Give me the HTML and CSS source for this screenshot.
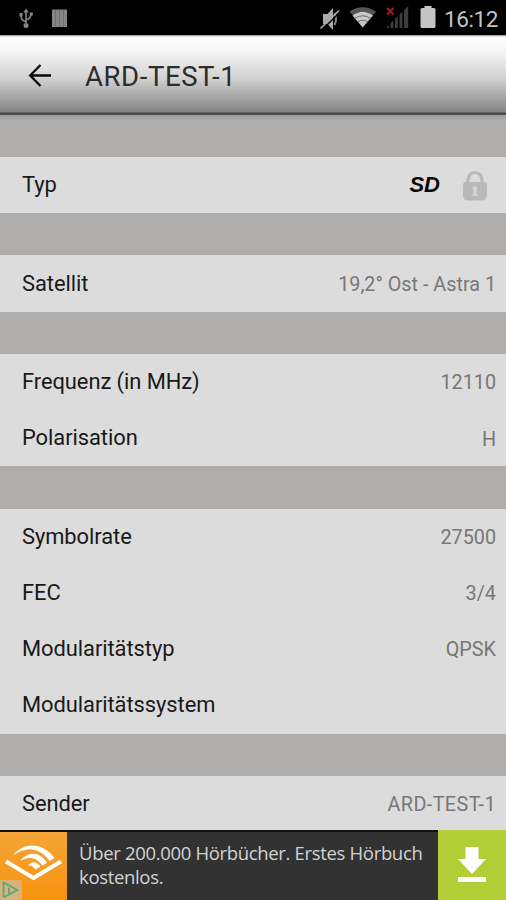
FILE: index.html
```html
<!DOCTYPE html>
<html lang="de">
<head>
<meta charset="utf-8">
<title>ARD-TEST-1</title>
<link rel="stylesheet" href="styles.css">
</head>
<body>
<div class="screen">
  <div class="status">
    <svg class="status-icons" width="80" height="36" viewBox="0 0 80 36">
      <g fill="none" stroke="#858585" stroke-width="1.6">
        <path d="M26 25V11M26 22C22 20 21 19 21 15M26 20C30 19 31 17 31 14"/>
      </g>
      <path fill="#858585" d="M26 8.500l2.700 4h-5.400zM19.500 13h3v3.500h-3zM29.800 12.500h3v3h-3z"/>
      <circle cx="26" cy="25.500" r="2.500" fill="#858585"/>
      <path fill="#858585" d="M52 9.500h15v17.500h-15z"/>
      <path stroke="#707070" stroke-width="1" d="M55.500 10v17M59.500 10v17M63.500 10v17"/>
    </svg>
    <svg class="status-icons" width="144" height="36" viewBox="300 0 144 36">
      <path fill="#aaa" d="M323 14h4.500l5.500-6v22l-5.500-6H323z"/>
      <path fill="none" stroke="#888" stroke-width="2" d="M334.500 13q3 6 0 12"/>
      <path stroke="#000" stroke-width="1.500" d="M322.500 29.500l18-18"/>
      <path stroke="#aaa" stroke-width="1.700" d="M320.500 28.500l18.500-18"/>
      <path fill="#555" d="M349.500 11.500q13.200-8.500 26.500 0l-3 3.500q-10.200-6.500-20.500 0z"/>
      <path fill="#c8c8c8" d="M352.500 15.500q10.200-7.500 20.500 0L362.700 27.500z"/>
      <path fill="none" stroke="#555" stroke-width=".8" d="M354.500 18.500q8.200-5.500 16.500 0M357.500 22q5.200-3.500 10.500 0"/>
      <path fill="#3d3d3d" d="M386 28l3-3v3zM390.500 28v-4.500l2.800-3V28zM395 28v-9l2.800-3v12zM399.500 28V14.500l2.800-3V28zM404 28V10l4.200-4v22z"/>
      <path stroke="#a51a22" stroke-width="2" d="M387 8l6.500 6.500M393.500 8L387 14.500"/>
      <path fill="#c4c4c4" d="M424.500 6h7v2h2.500q1.500 0 1.500 1.500v17q0 1.500-1.500 1.500h-12q-1.500 0-1.500-1.500v-17q0-1.500 1.500-1.500h2.500z"/>
    </svg>
    <span class="clock">16:12</span>
  </div>
  <header class="header">
    <svg width="24" height="24" viewBox="0 0 24 24"><path fill="none" stroke="#080808" stroke-width="2.300" d="M23 12.500H3M12.500 2L2.200 12.500L12.500 23"/></svg>
    <h1 class="title">ARD-TEST-1</h1>
  </header>
  <main class="list">
    <section class="group">
      <div class="row"><span class="label">Typ</span>
        <span class="badges"><b class="sd">SD</b>
        <svg class="lock" width="24" height="32" viewBox="0 0 24 32"><path fill="none" stroke="#b9b9b9" stroke-width="3.200" d="M5 14V10a7 7.500 0 0 1 14 0v4"/><path fill="#b9b9b9" d="M3 12h18q3 0 3 3v10q0 5.500-5 5.500H5q-5 0-5-5.500V15q0-3 3-3z"/><path fill="#d4d4d4" d="M9.500 17.500q3-3 4.500 0v6.500h1v2H9.500v-2h1v-4.500h-1z"/></svg></span>
      </div>
    </section>
    <section class="group"><div class="row"><span class="label">Satellit</span><span class="value">19,2° Ost - Astra 1</span></div></section>
    <section class="group">
      <div class="row"><span class="label">Frequenz (in MHz)</span><span class="value">12110</span></div>
      <div class="row"><span class="label">Polarisation</span><span class="value">H</span></div>
    </section>
    <section class="group">
      <div class="row"><span class="label">Symbolrate</span><span class="value">27500</span></div>
      <div class="row"><span class="label">FEC</span><span class="value">3/4</span></div>
      <div class="row"><span class="label">Modularitätstyp</span><span class="value">QPSK</span></div>
      <div class="row"><span class="label">Modularitätssystem</span></div>
    </section>
    <section class="group"><div class="row"><span class="label">Sender</span><span class="value value-name">ARD-TEST-1</span></div></section>
  </main>
  <footer class="ad">
    <div class="ad-logo">
      <svg width="67" height="68" viewBox="0 832 67 68">
        <path fill="none" stroke="#fff" stroke-width="4" d="M6 861.500L33.500 878L61 861.500"/>
        <path fill="#fff" d="M13 855.500C25 841 43 843 54.500 858L49.500 861C40 848 27 845.500 13 855.500zM20 861C29 850 40 852 47 862.500L42.500 865.500C36 857 29 856 20 861zM28 865.500C33 860 37 862 40.500 866.500L35.500 869.500C33 866 31 865 28 865.500z"/>
        <path fill="#d9b277" d="M0 880h19q3 0 3 3v17H0z"/>
        <path fill="none" stroke="#55a987" stroke-width="1.800" d="M3.500 897.500V882.500L17.500 890L9 894.500V887.500M3.500 897.500L8 895"/>
      </svg>
    </div>
    <p class="ad-text">Über 200.000 Hörbücher. Erstes Hörbuch<br>kostenlos.</p>
    <div class="ad-download">
      <svg width="30" height="36" viewBox="0 0 30 36"><path fill="#fff" d="M8.500 0h13v12H29L15 27 1 12h7.500zM1 30h28v5H1z"/></svg>
    </div>
  </footer>
</div>
</body>
</html>
```

FILE: styles.css
```css
body { margin: 0; background: #000; }
.screen {
  width: 506px; height: 900px; overflow: hidden;
  display: flex; flex-direction: column;
  font-family: Roboto, "Liberation Sans", sans-serif;
  background: #afaeac;
}
.status {
  box-sizing: border-box; height: 35px; flex: none; background: #000;
  display: flex; padding-right: 8px;
}
.status-icons { flex: none; }
.status-icons + .status-icons { margin-left: auto; }
.clock { width: 54px; font-size: 22.500px; line-height: 38px; letter-spacing: -.4px; color: #c4c4c4; white-space: nowrap; }
.header {
  box-sizing: border-box; height: 80px; flex: none;
  display: flex; align-items: center; gap: 33px; padding: 0 0 0 28px;
  background: linear-gradient(#888 0, #fff 2px, #f6f6f6 15px, #d4d4d4 42px, #858585 77px, #444 78px, #444 79px, #666 80px);
}
.title { margin: 0; padding-top: 3px; font-size: 27.500px; font-weight: 400; line-height: 34px; letter-spacing: .6px; color: #2c2c2c; white-space: nowrap; }
.list { flex: 1; min-height: 0; overflow: hidden; background: linear-gradient(#9b9b9a, #afaeac 6px); }
.group { margin-top: 42.200px; background: #dcdcdc; }
.group:first-child { margin-top: 42px; }
.row {
  box-sizing: border-box; height: 56.250px; padding: 0 10px 0 22px;
  display: flex; align-items: center; justify-content: space-between;
}
.label { font-size: 21.900px; line-height: 26px; letter-spacing: -.06px; color: #191919; }
.value { font-size: 19.800px; line-height: 26px; padding-top: 2.500px; color: #777; }
.value-name { letter-spacing: .4px; }
.badges { display: flex; align-items: center; gap: 23px; padding-right: 9px; }
.lock { position: relative; top: 1px; }
.sd { font: italic bold 22px/26px "Liberation Sans", sans-serif; color: #080808; }
.ad { height: 70px; flex: none; display: flex; background: #323232; box-sizing: border-box; border-top: 2px solid #111; }
.ad-logo { width: 67px; flex: none; background: linear-gradient(#f4a536, #f7930f); }
.ad-logo svg { display: block; }
.ad-text { flex: 1; margin: 0; padding: 9px 0 0 12px; font: 18.500px/24px "Open Sans", sans-serif; letter-spacing: -.33px; color: #d2d2d2; white-space: nowrap; }
.ad-download { width: 68px; margin-top: -2px; flex: none; background: #b2cd35; display: flex; align-items: center; justify-content: center; }
```
